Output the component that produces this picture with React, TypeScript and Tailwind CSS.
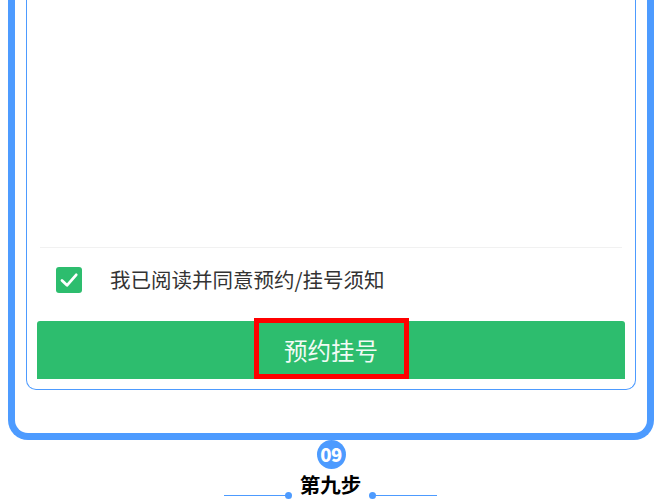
import React from "react";

export default function App() {
  const font = { fontFamily: '"Noto Sans CJK SC", "Noto Sans", sans-serif' };
  return (
    <div className="w-[662px] h-[502px] bg-white overflow-hidden" style={font}>
      <div className="mx-[8px] w-[646px] h-[440px] border-[#4d9bff] border-x-[7px] border-b-[7px] rounded-b-[20px] px-[11px] pb-[43px] box-border">
        <div className="h-full border-x border-b border-[#4d9bff] rounded-b-[10px] px-[10px] pb-[10px] flex flex-col">
          <div className="flex-1" />
          <div className="h-px bg-[#f1f1f1] mx-[3px]" />
          <div className="h-[73px] flex items-center pl-[19px] pb-[9px]">
            <div className="w-[26px] h-[26px] rounded-[3px] bg-[#2dbd6e] flex items-center justify-center">
              <svg width="22" height="22" viewBox="0 0 22 22" fill="none">
                <path d="M4 11.5 L9 16.3 L18.2 5.8" stroke="white" strokeWidth="2.8" strokeLinecap="round" strokeLinejoin="round" />
              </svg>
            </div>
            <span className="ml-[28px] text-[20.5px] leading-none text-[#333333] -mt-px">我已阅读并同意预约/挂号须知</span>
          </div>
          <div className="relative h-[58px] bg-[#2dbd6e] rounded-t-[3px] flex items-center justify-center">
            <span className="text-[23.5px] leading-none text-[#f2fbf5] mt-[2px]">预约挂号</span>
            <div className="absolute left-[217px] top-[-3px] w-[155px] h-[61px] border-[5px] border-[#ff0000]" />
          </div>
        </div>
      </div>
      <div className="flex flex-col items-center">
        <div className="w-[29px] h-[29px] rounded-full bg-[#4d9bff] flex items-center justify-center text-white font-black text-[18.5px] leading-none tracking-[-0.5px]">
          09
        </div>
        <div className="flex items-end mt-[3px] ml-[-1px]">
          <div className="flex items-center mb-[-2px]">
            <div className="w-[62px] h-px bg-[#4d9bff]" />
            <div className="w-[7px] h-[7px] rounded-full bg-[#4d9bff] -ml-px" />
          </div>
          <span className="mx-[8px] text-[20.5px] font-bold leading-[25px] text-black">第九步</span>
          <div className="flex items-center mb-[-2px]">
            <div className="w-[7px] h-[7px] rounded-full bg-[#4d9bff]" />
            <div className="w-[62px] h-px bg-[#4d9bff] -ml-px" />
          </div>
        </div>
      </div>
    </div>
  );
}
